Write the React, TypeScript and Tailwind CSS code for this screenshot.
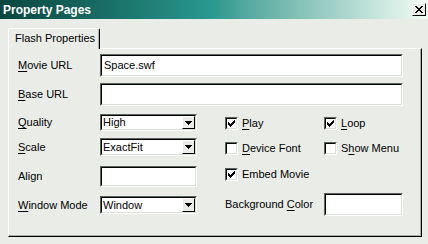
import React from 'react';

function Sunken({ className = '', children }: { className?: string; children?: React.ReactNode }) {
  return (
    <div className={`border-t border-l border-t-[#58645c] border-l-[#58645c] border-b border-r border-b-white border-r-white ${className}`}>
      <div className="h-full w-full border-t border-l border-t-black border-l-black border-b border-r border-b-[#dde0da] border-r-[#dde0da] bg-white flex items-center">
        {children}
      </div>
    </div>
  );
}

function Key({ children }: { children: React.ReactNode }) {
  return <span className="underline underline-offset-[2px]">{children}</span>;
}

function TextBox({ value = '', className = '' }: { value?: string; className?: string }) {
  return (
    <Sunken className={className}>
      <span className="pl-[2px] leading-none">{value}</span>
    </Sunken>
  );
}

function Combo({ value, className = '' }: { value: string; className?: string }) {
  return (
    <Sunken className={className}>
      <span className="flex-1 pl-[1px] leading-none">{value}</span>
      <div className="h-full w-[13px] bg-[#e9ece7] border-t border-l border-t-white border-l-white border-b border-r border-b-black border-r-black flex items-center justify-center">
        <svg width="7" height="4" viewBox="0 0 7 4" shapeRendering="crispEdges">
          <path d="M0 0h7v1h-1v1h-1v1h-1v1h-1v-1h-1v-1h-1v-1h-1z" fill="#000" />
        </svg>
      </div>
    </Sunken>
  );
}

function Check({ checked, children }: { checked?: boolean; children: React.ReactNode }) {
  return (
    <div className="flex items-center h-[14px]">
      <Sunken className="w-[13px] h-[13px]">
        {checked && (
          <svg width="7" height="7" viewBox="0 0 7 7" shapeRendering="crispEdges" className="ml-[1px]">
            <path
              d="M6 0h1v3h-1v1h-1v1h-1v1h-1v1h-1v-1h-1v-1h-1v-3h1v1h1v1h1v-1h1v-1h1v-1h1z"
              fill="#000"
            />
          </svg>
        )}
      </Sunken>
      <span className="ml-[4px] leading-none">{children}</span>
    </div>
  );
}

export default function App() {
  return (
    <div className="w-[428px] h-[244px] overflow-hidden bg-[#e9ece7] text-[11px] text-black font-['Liberation_Sans',Arial,sans-serif]">
      <div className="h-[19px] flex items-center justify-between pl-[3px] pr-[2px] bg-gradient-to-r from-[#0a4640] via-[#2a9a90] to-[#f2fdf6]">
        <span className="text-white font-bold text-[12px] leading-none">Property Pages</span>
        <div className="w-[14px] h-[13px] bg-[#e9ece7] border-t border-l border-t-white border-l-white border-b border-r border-b-black border-r-black flex items-center justify-center">
          <svg width="8" height="7" viewBox="0 0 8 7" shapeRendering="crispEdges">
            <path
              d="M0 0h2v1h1v1h2v-1h1v-1h2v1h-1v1h-1v1h-1v1h1v1h1v1h1v1h-2v-1h-1v-1h-2v1h-1v1h-2v-1h1v-1h1v-1h1v-1h-1v-1h-1v-1h-1z"
              fill="#000"
            />
          </svg>
        </div>
      </div>

      <div className="pl-[8px] pt-[9px]">
        <div className="relative z-10 -mb-px w-[92px] h-[21px] bg-[#e9ece7] border-t border-l border-t-white border-l-white border-r border-r-black rounded-t-[2px] shadow-[inset_-1px_0_0_#a8b0a8] flex items-center pl-[6px] pb-[1px]">
          Flash Properties
        </div>
        <div className="w-[414px] h-[189px] border-t border-l border-t-white border-l-white border-b border-r border-b-black border-r-black shadow-[inset_-1px_-1px_0_#a8b0a8] pl-[9px] pt-[5px]">
          <div className="flex items-center h-[23px]">
            <span className="w-[82px]"><Key>M</Key>ovie URL</span>
            <TextBox value="Space.swf" className="w-[303px] h-[23px]" />
          </div>
          <div className="flex items-center h-[23px] mt-[6px]">
            <span className="w-[82px]"><Key>B</Key>ase URL</span>
            <TextBox className="w-[303px] h-[23px]" />
          </div>

          <div className="flex mt-[8px]">
            <div className="w-[207px] flex flex-col">
              <div className="flex items-center h-[17px]">
                <span className="w-[82px]"><Key>Q</Key>uality</span>
                <Combo value="High" className="w-[97px] h-[17px]" />
              </div>
              <div className="flex items-center h-[18px] mt-[7px]">
                <span className="w-[82px]"><Key>S</Key>cale</span>
                <Combo value="ExactFit" className="w-[97px] h-[18px]" />
              </div>
              <div className="flex items-center h-[21px] mt-[10px]">
                <span className="w-[82px]">Align</span>
                <TextBox className="w-[97px] h-[21px]" />
              </div>
              <div className="flex items-center h-[18px] mt-[9px]">
                <span className="w-[82px]"><Key>W</Key>indow Mode</span>
                <Combo value="Window" className="w-[97px] h-[18px]" />
              </div>
            </div>

            <div className="flex flex-col">
              <div className="flex mt-[2px]">
                <div className="w-[99px]"><Check checked><Key>P</Key>lay</Check></div>
                <Check checked><Key>L</Key>oop</Check>
              </div>
              <div className="flex mt-[11px]">
                <div className="w-[99px]"><Check><Key>D</Key>evice Font</Check></div>
                <Check>S<Key>h</Key>ow Menu</Check>
              </div>
              <div className="flex mt-[12px]">
                <Check checked>Embed Movie</Check>
              </div>
              <div className="flex items-center h-[23px] mt-[12px]">
                <span className="w-[99px]">Background <Key>C</Key>olor</span>
                <TextBox className="w-[79px] h-[23px]" />
              </div>
            </div>
          </div>
        </div>
      </div>
    </div>
  );
}
